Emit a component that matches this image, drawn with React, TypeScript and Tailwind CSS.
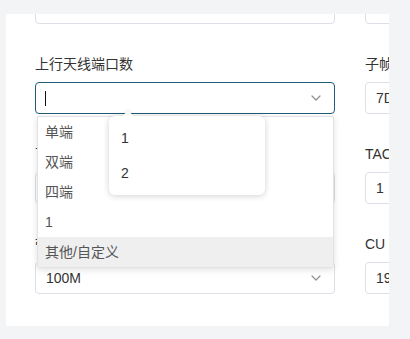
import React from 'react';
import { ChevronDown } from 'lucide-react';

const font = { fontFamily: '"Liberation Sans", "Noto Sans CJK SC", sans-serif' };

type FieldProps = {
  label: string;
  value?: string;
  select?: boolean;
  focused?: boolean;
  children?: React.ReactNode;
};

const Field: React.FC<FieldProps> = ({ label, value, select, focused, children }) => (
  <div className="mb-[30px]">
    <div className="h-[20px] mb-[8px] text-[14px] leading-[20px] text-[#333] whitespace-nowrap">{label}</div>
    <div className="relative">
      <div
        className={`h-[32px] rounded-[4px] border flex items-center pl-[10px] pr-[10px] text-[14px] text-[#333] whitespace-nowrap ${
          focused ? 'border-[#1f5b78]' : 'border-[#dcdfe6]'
        }`}
      >
        <span className="flex-1 overflow-hidden">{value}</span>
        {select && <ChevronDown className="h-[16px] w-[16px] text-[#8f8f8f]" strokeWidth={1.8} />}
      </div>
      {children}
    </div>
  </div>
);

const options = ['单端', '双端', '四端', '1', '其他/自定义'];

const App: React.FC = () => {
  return (
    <div className="w-[410px] h-[339px] bg-[#f3f4f6] pt-[14px] pl-[6px] overflow-hidden" style={font}>
      <div className="w-[383px] h-[312px] bg-white overflow-hidden">
        <div className="-mt-[50px] pl-[29px] grid grid-cols-[300px_300px] gap-x-[30px]">
          {/* left column */}
          <div>
            <Field label="基站名称" value="" />
            <Field label="上行天线端口数" select focused value="">
              <span className="absolute left-[10px] top-[9px] w-px h-[15px] bg-[#111]" />
              {/* option list */}
              <div className="absolute z-10 top-full left-[2px] right-[1px] mt-[2px] bg-white border border-[#e2e2e2] rounded-b-[3px] shadow-[0_2px_6px_rgba(0,0,0,0.12)]">
                {options.map((o, i) => (
                  <div
                    key={o}
                    className={`h-[30px] leading-[30px] pl-[7px] text-[14px] text-[#555] ${
                      i === options.length - 1 ? 'bg-[#efefef]' : ''
                    }`}
                  >
                    {o}
                  </div>
                ))}
              </div>
              {/* suggestion popover */}
              <div className="absolute z-20 top-full left-[74px] mt-[2px] w-[156px] bg-white rounded-[6px] shadow-[0_1px_6px_rgba(0,0,0,0.18)] pt-[5px] pb-[4px]">
                <div className="absolute -top-[4px] left-[15px] w-[8px] h-[8px] bg-white rotate-45 shadow-[-1px_-1px_2px_rgba(0,0,0,0.08)]" />
                <div className="h-[35px] leading-[35px] pl-[12px] text-[14px] text-[#333]">1</div>
                <div className="h-[35px] leading-[35px] pl-[12px] text-[14px] text-[#333]">2</div>
              </div>
            </Field>
            <Field label="下行天线端口数" value="" />
            <Field label="带宽" select value="100M" />
          </div>
          {/* right column */}
          <div>
            <Field label="PCI" value="" />
            <Field label="子帧配比" value="7DS2U" />
            <Field label="TAC" value="1" />
            <Field label="CU IP" value="192.168.1.1" />
          </div>
        </div>
      </div>
    </div>
  );
};

export default App;
